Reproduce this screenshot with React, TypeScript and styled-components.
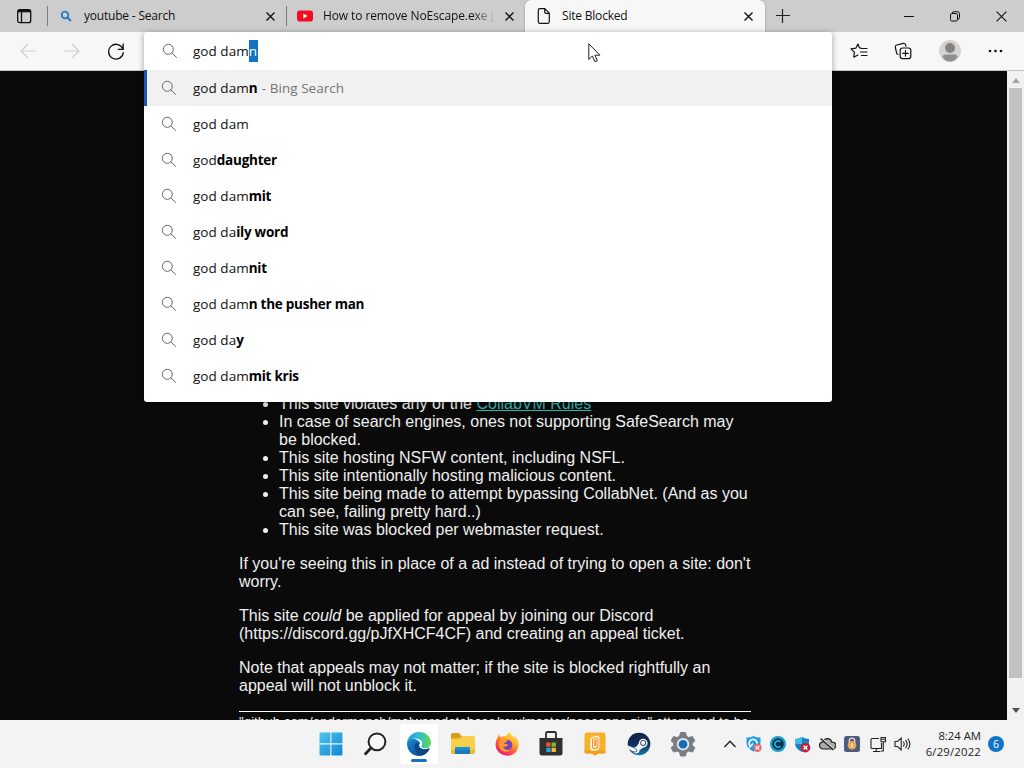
import React from "react";
import styled, { createGlobalStyle } from "styled-components";

const ui = `"Open Sans", "Noto Sans", sans-serif`;

const GlobalStyle = createGlobalStyle`
  * { box-sizing: border-box; }
  body { margin: 0; background: #0a0a0a; overflow: hidden; }
  svg { display: block; flex: none; }
`;

const Desktop = styled.div`
  position: relative;
  width: 1024px;
  height: 768px;
  display: flex;
  flex-direction: column;
  overflow: hidden;
  font-family: ${ui};
  color: #111;
`;

const TabStrip = styled.div`
  height: 32px;
  flex: none;
  display: flex;
  background: #cdcdcd;
`;

const TabActions = styled.div`
  width: 47px;
  padding: 9px 0 0 17px;
`;

const Divider = styled.div`
  width: 1px;
  height: 20px;
  margin-top: 6px;
  background: #7c7c7c;
`;

const Tab = styled.div<{ $active?: boolean; $width: number }>`
  width: ${(p) => p.$width}px;
  height: 32px;
  display: flex;
  align-items: center;
  padding: 0 ${(p) => (p.$active ? 10 : 9)}px 0 ${(p) => (p.$active ? 11 : 10)}px;
  background: ${(p) => (p.$active ? "#f7f7f7" : "transparent")};
  border-radius: ${(p) => (p.$active ? "6px 6px 0 0" : "0")};
  box-shadow: ${(p) => (p.$active ? "0 0 2px rgba(0, 0, 0, 0.3)" : "none")};
`;

const TabIcon = styled.span`
  width: 16px;
  height: 16px;
  flex: none;
  display: flex;
  align-items: center;
  justify-content: center;
`;

const TabTitle = styled.span<{ $spacing: number; $faded?: boolean }>`
  flex: 1;
  margin-left: 10px;
  font-size: 12px;
  line-height: 32px;
  height: 32px;
  letter-spacing: ${(p) => p.$spacing}px;
  white-space: nowrap;
  overflow: hidden;
  mask-image: ${(p) => (p.$faded ? "linear-gradient(to right, #000 calc(100% - 22px), transparent)" : "none")};
`;

const TabClose = styled.span`
  margin-left: 8px;
  padding: 1px 2px 0;
`;

const NewTab = styled.div`
  padding: 9px 0 0 11px;
`;

const WindowControls = styled.div`
  margin-left: auto;
  display: flex;
`;

const WindowButton = styled.div`
  width: 46px;
  height: 32px;
  display: flex;
  align-items: center;
  justify-content: center;
`;

const Toolbar = styled.div`
  height: 39px;
  flex: none;
  display: flex;
  align-items: center;
  justify-content: space-between;
  padding: 0 21px 0 20px;
  background: #f7f7f7;
  border-bottom: 1px solid #c4c4c4;
`;

const ToolGroup = styled.div<{ $gap: number }>`
  display: flex;
  align-items: center;
  gap: ${(p) => p.$gap}px;
`;

const Viewport = styled.div`
  height: 649px;
  flex: none;
  display: flex;
  background: #0a0a0a;
  overflow: hidden;
`;

const Page = styled.main`
  flex: 1;
  padding: 324px 0 0 239px;
  overflow: hidden;
  font: 16px/18px "Liberation Sans", Arial, sans-serif;
  color: #efefef;
`;

const Article = styled.article`
  width: 512px;
`;

const Reasons = styled.ul`
  margin: 0;
  padding-left: 40px;
`;

const RulesLink = styled.a`
  color: #2bb5ab;
  text-decoration: underline;
`;

const Paragraph = styled.p`
  margin: 16px 0;
`;

const Rule = styled.hr`
  height: 1px;
  margin: 0;
  border: 0;
  background: #fff;
`;

const Footnote = styled.div`
  font-size: 13.33px;
  line-height: 15px;
  margin-top: 2px;
  white-space: nowrap;
`;

const Scrollbar = styled.div`
  width: 17px;
  padding: 7px 2px 7px;
  display: flex;
  flex-direction: column;
  align-items: center;
  background: #f1f1f1;
`;

const Thumb = styled.div`
  width: 13px;
  height: 590px;
  margin: 5px 0 auto;
  background: #c1c1c1;
`;

const Omnibox = styled.div`
  position: absolute;
  left: 144px;
  top: 32px;
  width: 688px;
  height: 370px;
  background: #fff;
  border-radius: 3px;
  box-shadow: 0 1px 6px rgba(0, 0, 0, 0.35);
  overflow: visible;
`;

const Row = styled.div<{ $height: number; $selected?: boolean }>`
  height: ${(p) => p.$height}px;
  display: flex;
  align-items: center;
  gap: 16px;
  padding-left: ${(p) => (p.$selected ? 14 : 17)}px;
  border-left: ${(p) => (p.$selected ? "3px solid #1a56ab" : "0")};
  background: ${(p) => (p.$selected ? "#f1f1f1" : "transparent")};
`;

const InputRow = styled(Row)`
  gap: 15px;
  padding-left: 18px;
`;

const Query = styled.span`
  font-size: 13.5px;
  line-height: 20px;
  letter-spacing: 0.03px;
  white-space: pre;
  color: #111;
`;

const Match = styled.b`
  font-weight: 700;
  letter-spacing: -0.25px;
  color: #000;
`;

const Selection = styled.span`
  display: inline-block;
  height: 22px;
  line-height: 22px;
  padding-right: 1px;
  background: #1173c6;
  color: #fff;
`;

const Source = styled.span`
  padding-left: 1px;
  color: #747474;
`;

const Pointer = styled.div`
  position: absolute;
  left: 588px;
  top: 43px;
`;

const Taskbar = styled.div`
  height: 48px;
  flex: none;
  display: flex;
  background: #f3f3f3;
`;

const Apps = styled.div`
  margin-left: 309px;
  display: flex;
  align-items: center;
`;

const AppButton = styled.div<{ $active?: boolean }>`
  width: 38px;
  height: 40px;
  margin: 0 3px;
  border-radius: 4px;
  display: flex;
  flex-direction: column;
  align-items: center;
  justify-content: center;
  background: ${(p) => (p.$active ? "#fff" : "transparent")};
`;

const Running = styled.span`
  width: 16px;
  height: 3px;
  margin: 3px 0 -6px;
  border-radius: 2px;
  background: #1570bd;
`;

const Tray = styled.div`
  margin-left: 17px;
  display: flex;
  align-items: center;
  gap: 8px;
`;

const Clock = styled.div`
  margin-left: auto;
  padding-top: 8px;
  display: flex;
  flex-direction: column;
  align-items: flex-end;
  font-size: 11.3px;
  line-height: 16px;
  color: #222;
`;

const ClockLine = styled.span<{ $spacing: number }>`
  letter-spacing: ${(p) => p.$spacing}px;
`;

const Badge = styled.div`
  width: 16px;
  height: 16px;
  margin: 16px 20px 0 7px;
  border-radius: 50%;
  background: #1173c6;
  color: #fff;
  font-size: 10.5px;
  line-height: 16px;
  text-align: center;
`;

const SearchIcon = () => (
  <svg width="16" height="16" viewBox="0 0 16 16" fill="none" stroke="#666" strokeWidth="1">
    <circle cx="6.3" cy="6.3" r="5" />
    <path d="M9.900 9.900l4.900 4.800" />
  </svg>
);

const CloseIcon = ({ size = 9, width = 1.4 }: { size?: number; width?: number }) => (
  <svg width={size} height={size} viewBox="0 0 9 9" stroke="#111" strokeWidth={width}>
    <path d="M.5.5l8 8M8.5.5l-8 8" />
  </svg>
);

const WindowsIcon = () => (
  <svg width="24" height="24" viewBox="0 0 24 24">
    <defs>
      <linearGradient id="win" x1="0" y1="0" x2="1" y2="1">
        <stop stopColor="#4cc5ef" />
        <stop offset="1" stopColor="#1286d4" />
      </linearGradient>
    </defs>
    <path fill="url(#win)" d="M.5 1.5Q.5.5 1.5.5h9.8v10.8H.5zM12.4.5h10q1 0 1 1v9.8h-11zM.5 12.4h10.8v11H1.5q-1 0-1-1zM12.4 12.4h11v10q0 1-1 1h-10z" />
  </svg>
);

const EdgeIcon = () => (
  <svg width="24" height="24" viewBox="0 0 24 24">
    <defs>
      <linearGradient id="edgeTop" x1="0" y1=".5" x2="1" y2=".5">
        <stop stopColor="#2399d9" />
        <stop offset=".5" stopColor="#2dbed0" />
        <stop offset="1" stopColor="#67d94c" />
      </linearGradient>
      <linearGradient id="edgeBody" x1="0" y1="0" x2=".7" y2="1">
        <stop stopColor="#168ad4" />
        <stop offset="1" stopColor="#0b4b91" />
      </linearGradient>
    </defs>
    <path fill="url(#edgeBody)" d="M0 11.5C1 7 5 6 8.500 7.200c3 1 4.500 2.800 4.700 4.800-.8 0-1 .6-1 1.400 0 3.300 4.800 5.200 9.800 3.200.4-.2.7.1.4.5C20.200 21 16.500 24 12 24 5.400 24 0 19 0 11.500z" />
    <path fill="#0d4686" d="M8.800 10.500C5.600 14.500 8 22 14.500 23.700 18.300 23 21 20 22.400 17.200c.4-.6 0-.9-.5-.7-5.400 2.200-11.600-.6-10-5z" />
    <path fill="url(#edgeTop)" d="M0 11.500C.3 4.900 5.500 0 12 0c7 0 12 5 12 10.400 0 3.600-2.700 5.800-6 5.800-2.900 0-4.400-1-3.600-2.200 2.600-4-1-7.600-6-7.600-4 0-7 2-8.400 5.100z" />
  </svg>
);

const FolderIcon = () => (
  <svg width="26" height="24" viewBox="0 0 26 24">
    <path fill="#d99d16" d="M1 3q0-2 2-2h6l3 3.500v4H1z" />
    <path fill="#f8cf4a" d="M1 6.500h8.500l3-2.500H23q2 0 2 2v14q0 2-2 2H3q-2 0-2-2z" />
    <path fill="#efb52d" d="M1 18h24v2q0 2-2 2H3q-2 0-2-2z" />
    <path fill="#1b78bd" d="M5 22v-5.500Q5 15 6.500 15h12q1.500 0 1.500 1.500V22z" />
    <path fill="#1b91d4" d="M5 18v-1.500Q5 15 6.500 15h12q1.500 0 1.500 1.500V18z" />
  </svg>
);

const FirefoxIcon = () => (
  <svg width="24" height="24" viewBox="0 0 24 24">
    <defs>
      <linearGradient id="fox" x1=".9" y1="0" x2=".25" y2="1">
        <stop stopColor="#fff24a" />
        <stop offset=".4" stopColor="#ffac27" />
        <stop offset=".7" stopColor="#ff4b43" />
        <stop offset="1" stopColor="#e51782" />
      </linearGradient>
    </defs>
    <path fill="url(#fox)" d="M3 5l.3-2.500L6 5.200c2-1.200 4-.9 5.500-1.200C12 2 13.600.6 15 0c-.1 2.500 2.500 3.500 4.400 6l.3-2C24.700 9 24.800 16 20.500 20.500 15.500 25.500 6 24.500 2 18 -.5 14 .6 8 3 5z" />
    <circle cx="12" cy="13" r="5.300" fill="#7941bd" />
    <path fill="#ff9a2b" d="M5 8c3-2 5-.5 7.500.5-.5 2-3.500 1.500-3.700 3.500 1.700-.7 3.500-.2 4.500 1.200-2 .8-3 2.300-5.300 1.300 1 3 5 4.500 8 2.500-3 5-11 3-12-3C3.600 11.500 4 9.500 5 8z" />
  </svg>
);

const StoreIcon = () => (
  <svg width="24" height="26" viewBox="0 0 24 26">
    <path fill="none" stroke="#2c2c2c" strokeWidth="1.800" d="M7 8V2.500Q7 1 8.500 1h7Q17 1 17 2.500V8" />
    <path fill="#303030" d="M.5 7h23v15q0 2.500-2.500 2.500H3Q.5 24.500.5 22z" />
    <path fill="#ef5424" d="M7.300 11.500h4.300v4.300H7.300z" />
    <path fill="#7cb928" d="M12.600 11.500h4.300v4.300h-4.300z" />
    <path fill="#20a2e4" d="M7.300 16.800h4.300v4.300H7.300z" />
    <path fill="#fbb72b" d="M12.600 16.800h4.300v4.300h-4.300z" />
  </svg>
);

const OrangeAppIcon = () => (
  <svg width="24" height="24" viewBox="0 0 24 24">
    <path fill="#f8b02a" d="M1.500 3q0-2.500 2.500-2.500h16q2.500 0 2.500 2.500v17q0 1.500-2 1.500h-5l-3.500 2-3.500-2h-5q-2 0-2-1.500z" />
    <path fill="#f0a01c" d="M1.500 18.500h21V20q0 1.500-2 1.500h-5l-3.500 2-3.500-2h-5q-2 0-2-1.500z" />
    <path fill="#fdf0cd" d="M7.200 7.500q0-2 2-2.500l3.500-1.200q3.800-.8 3.800 2.700v8q0 3.500-4 4.200H10q-3 0-3-3z" />
    <path fill="none" stroke="#ee9238" strokeWidth="1.100" d="M9.600 8q0-2 2.500-2h.7q2.100 0 2.100 2v5.500q0 3-2.500 3h-.8q-2.100 0-2.100-2.300zM11.800 8.500q1.200-1 1.200.6v3.700q-.2 1.300-1.200.8z" />
  </svg>
);

const SteamIcon = () => (
  <svg width="24" height="24" viewBox="0 0 24 24">
    <defs>
      <linearGradient id="steam" x1="0" y1="0" x2="0" y2="1">
        <stop stopColor="#12213f" />
        <stop offset=".5" stopColor="#102e5d" />
        <stop offset="1" stopColor="#1d78ae" />
      </linearGradient>
    </defs>
    <circle cx="12" cy="12" r="11.300" fill="url(#steam)" />
    <path fill="#f3f7fa" d="M.8 13.500l6 2.400q1-.8 2.300-.8l2.700-3.900a4.400 4.400 0 1 1 4.500 4.300l-3.800 2.700a3.400 3.400 0 0 1-6.600 1L1.500 17z" />
    <circle cx="16.200" cy="10.900" r="2.900" fill="#173963" />
    <circle cx="16.200" cy="10.900" r="2.100" fill="#f3f7fa" />
    <path fill="none" stroke="#173963" strokeWidth=".8" d="M7.500 16.500l1.300.5a1.600 1.600 0 0 1-1.200 3l-1.400-.6" />
  </svg>
);

const SettingsIcon = () => (
  <svg width="26" height="26" viewBox="0 0 26 26">
    <path
      fill="#787d83"
      stroke="#787d83"
      strokeWidth="1"
      strokeLinejoin="round"
      d="M10.500 1.500h5l.8 3.600 2.500 1.500 3.600-1.100 2.500 4.300-2.700 2.500v2l2.700 2.500-2.500 4.300-3.600-1.100-2.500 1.500-.8 3.500h-5l-.8-3.500-2.500-1.500-3.600 1.100-2.500-4.300 2.700-2.500v-2L1.100 9.800l2.500-4.300 3.600 1.100 2.500-1.500z"
    />
    <circle cx="13" cy="13.200" r="6.200" fill="#e0e7eb" />
    <circle cx="13" cy="13.200" r="4.300" fill="#1769b2" />
  </svg>
);

const trayIcons = [
  <svg key="chevron" width="16" height="16" fill="none" stroke="#222" strokeWidth="1.400"><path d="M2.500 11L8 5.300l5.500 5.700" /></svg>,
  <svg key="shield" width="16" height="16" viewBox="0 0 16 16">
    <path fill="#1d9de3" d="M.5 1.500Q4 2 7.500 0q3.500 2 7 1.500V7q0 5.500-7 8.500-7-3-7-8.500z" />
    <path fill="none" stroke="#e4f5fd" strokeWidth="1.800" d="M4.500 10.500A4 4 0 1 1 11 8M3 12l4-4.500" />
    <circle cx="11.500" cy="11.800" r="4.200" fill="#ed6671" />
    <path stroke="#fff" strokeWidth="1.200" d="M9.700 10l3.600 3.600m0-3.600l-3.600 3.600" />
  </svg>,
  <svg key="c" width="16" height="16" viewBox="0 0 16 16" fill="none">
    <circle cx="8" cy="8" r="8" fill="#1b9fce" />
    <circle cx="8" cy="8" r="5.800" fill="#0b3448" />
    <path stroke="#25a8d6" strokeWidth="1.800" d="M10.500 5.800A3.200 3.200 0 1 0 10.500 10.200" />
  </svg>,
  <svg key="defender" width="17" height="17" viewBox="0 0 17 17">
    <path fill="#1682c5" d="M1 3q4 0 7-2 3 2 7 2v4q0 6-7 9-7-3-7-9z" />
    <path fill="#49b8e7" d="M1 3q4 0 7-2v7H1z" />
    <circle cx="11.500" cy="11.700" r="4.800" fill="#c91f35" />
    <path stroke="#fff" strokeWidth="1.400" d="M9.600 9.800l3.800 3.800m0-3.800l-3.800 3.800" />
  </svg>,
  <svg key="cloud" width="17" height="16" viewBox="0 0 17 16" fill="none" stroke="#222" strokeWidth="1.200">
    <path fill="#aaa" d="M4 13a3.600 3.600 0 1 1 .2-7.200 4.400 4.400 0 0 1 8.500.3 3.500 3.500 0 1 1 .3 6.900z" />
    <path stroke="#f3f3f3" strokeWidth="2" d="M2.500 2.500l12 11" />
    <path strokeWidth="1.500" d="M1.500 2.500l13 11.500" />
  </svg>,
  <svg key="lock" width="16" height="16" viewBox="0 0 16 16">
    <rect width="16" height="16" rx="2.500" fill="#4b5c83" />
    <path fill="none" stroke="#e6d8c8" strokeWidth="1.400" d="M5.300 7V4.800a2.700 2.700 0 0 1 5.400 0V7" />
    <circle cx="8" cy="9.300" r="4.300" fill="#efa64f" />
    <path fill="#fff2dd" d="M7.200 7.500h1.600v3.800H7.200z" />
  </svg>,
  <svg key="network" width="18" height="17" viewBox="0 0 18 17" fill="none" stroke="#222" strokeWidth="1.100">
    <path d="M11 2.500H4Q3 2.500 3 3.500v8q0 1 1 1h9.500V7M8.200 12.500v3M5 15.500h7.500M13 1.500h4.500v4.300H13zM15.300 5.800V15H13M13 3.200h4.500" />
  </svg>,
  <svg key="volume" width="17" height="16" viewBox="0 0 17 16" fill="none" stroke="#222" strokeWidth="1.100">
    <path d="M1 5.500h2.500L7.200 2v12L3.500 10.500H1zM9.300 5.500q1.800 2.500 0 5M11.500 3.800q3.200 4.200 0 8.400M13.800 2.500q4.200 5.500 0 11" />
  </svg>,
];

const suggestions: [string, string][] = [
  ["god dam", ""],
  ["god", "daughter"],
  ["god dam", "mit"],
  ["god da", "ily word"],
  ["god dam", "nit"],
  ["god dam", "n the pusher man"],
  ["god da", "y"],
  ["god dam", "mit kris"],
];

export default function App() {
  return (
    <Desktop>
      <GlobalStyle />
      <TabStrip>
        <TabActions>
          <svg width="15" height="15" viewBox="0 0 15 15" fill="none" stroke="#111" strokeWidth="1.300">
            <rect x=".7" y=".7" width="13" height="13" rx="2" />
            <path strokeWidth="2.600" d="M1 2h12.500" />
            <path d="M4.500 3v10.500" />
          </svg>
        </TabActions>
        <Divider />
        <Tab $width={238}>
          <TabIcon>
            <svg width="12" height="12" viewBox="0 0 12 12" fill="none" stroke="#2879c7" strokeWidth="1.800">
              <circle cx="5" cy="5" r="3.300" />
              <path strokeWidth="2.100" d="M7.400 7.400l3.500 3.500" />
            </svg>
          </TabIcon>
          <TabTitle $spacing={-0.2}>youtube - Search</TabTitle>
          <TabClose><CloseIcon /></TabClose>
        </Tab>
        <Divider />
        <Tab $width={238}>
          <TabIcon>
            <svg width="16" height="12" viewBox="0 0 16 12">
              <rect y=".4" width="16" height="11.200" rx="2.800" fill="#f20d20" />
              <path fill="#fff" d="M6.300 3.500l4.300 2.500-4.300 2.500z" />
            </svg>
          </TabIcon>
          <TabTitle $spacing={-0.1} $faded>How to remove NoEscape.exe [D</TabTitle>
          <TabClose><CloseIcon /></TabClose>
        </Tab>
        <Tab $width={240} $active>
          <TabIcon>
            <svg width="14" height="16" viewBox="0 0 14 16" fill="none" stroke="#111" strokeWidth="1.200" strokeLinejoin="round">
              <path d="M2.800.7h5l4.500 4.500v8.600q0 1.500-1.500 1.500h-8Q1.300 15.300 1.300 13.800V2.200Q1.300.7 2.800.7zM7.700.9v3q0 1.400 1.400 1.400h3" />
            </svg>
          </TabIcon>
          <TabTitle $spacing={-0.2}>Site Blocked</TabTitle>
          <TabClose><CloseIcon /></TabClose>
        </Tab>
        <NewTab>
          <svg width="14" height="14" stroke="#222" strokeWidth="1.200"><path d="M0 6.500h14M6.500 0v14" /></svg>
        </NewTab>
        <WindowControls>
          <WindowButton><svg width="10" height="10" stroke="#111"><path d="M0 5.500h10" /></svg></WindowButton>
          <WindowButton>
            <svg width="10" height="11" viewBox="0 0 10 11" fill="none" stroke="#111">
              <rect x=".5" y="2.500" width="7" height="7.500" rx="1.300" />
              <path d="M2.300 2.300Q2.300.7 4 .7h3.500q2 0 2 2v4q0 1.500-1.700 1.500" />
            </svg>
          </WindowButton>
          <WindowButton><CloseIcon size={11} width={0.9} /></WindowButton>
        </WindowControls>
      </TabStrip>

      <Toolbar>
        <ToolGroup $gap={28}>
          <svg width="16" height="16" fill="none" stroke="#cfcfcf" strokeWidth="1.200"><path d="M16 8H1M8 1L1 8l7 7" /></svg>
          <svg width="16" height="16" fill="none" stroke="#cfcfcf" strokeWidth="1.200"><path d="M0 8h15M8 1l7 7-7 7" /></svg>
          <svg width="17" height="17" viewBox="0 0 17 17" fill="none" stroke="#111" strokeWidth="1.300">
            <path d="M15 6.200A7.400 7.400 0 1 0 15.400 9.300M15.200.5v5.900H9.800" />
          </svg>
        </ToolGroup>
        <ToolGroup $gap={26.5}>
          <svg width="18" height="18" viewBox="0 0 18 18" fill="none" stroke="#111" strokeWidth="1.200" strokeLinejoin="round" strokeLinecap="round">
            <path d="M11 6.200L9.500 5.900 8 2 5.900 6.100 1 6.800l3.500 3.500-.8 4.900 4.200-2.200M11.500 6.500H17M10.500 10H17M11.500 13.500H17" />
          </svg>
          <svg width="18" height="18" viewBox="0 0 18 18" fill="none" stroke="#111" strokeWidth="1.200" strokeLinecap="round">
            <path d="M4 12.500Q2.800 12 2.600 10.800L1.300 5.300Q1 3.400 2.800 3L9.300 1.300q1.700-.3 2.200 1.300l.4 1.500" />
            <rect x="6.200" y="6" width="10.600" height="10.600" rx="2.300" />
            <path d="M11.500 8.500v5.600M8.700 11.300h5.600" />
          </svg>
          <svg width="22" height="22" viewBox="0 0 22 22">
            <circle cx="11" cy="11" r="11" fill="#d6d4d2" />
            <circle cx="11" cy="8" r="5" fill="#858381" />
            <path fill="#918f8d" d="M3.500 17q0-2.500 3-2.500h9q3 0 3 2.500-3 4.500-7.500 4.500T3.500 17z" />
          </svg>
          <svg width="16" height="4" fill="#111"><circle cx="3" cy="2" r="1.300" /><circle cx="8.500" cy="2" r="1.300" /><circle cx="14" cy="2" r="1.300" /></svg>
        </ToolGroup>
      </Toolbar>

      <Viewport>
        <Page>
          <Article>
            <Reasons>
              <li>This site violates any of the <RulesLink>CollabVM Rules</RulesLink></li>
              <li>In case of search engines, ones not supporting SafeSearch may be blocked.</li>
              <li>This site hosting NSFW content, including NSFL.</li>
              <li>This site intentionally hosting malicious content.</li>
              <li>This site being made to attempt bypassing CollabNet. (And as you can see, failing pretty hard..)</li>
              <li>This site was blocked per webmaster request.</li>
            </Reasons>
            <Paragraph>If you're seeing this in place of a ad instead of trying to open a site: don't worry.</Paragraph>
            <Paragraph>This site <i>could</i> be applied for appeal by joining our Discord (https://discord.gg/pJfXHCF4CF) and creating an appeal ticket.</Paragraph>
            <Paragraph>Note that appeals may not matter; if the site is blocked rightfully an appeal will not unblock it.</Paragraph>
            <Rule />
            <Footnote>"github.com/endermanch/malwaredatabase/raw/master/noescape.zip" attempted to be</Footnote>
          </Article>
        </Page>
        <Scrollbar>
          <svg width="8" height="5" fill="#a3a3a3"><path d="M0 5l4-5 4 5z" /></svg>
          <Thumb />
          <svg width="8" height="5" fill="#505050"><path d="M0 0l4 5 4-5z" /></svg>
        </Scrollbar>
      </Viewport>

      <Taskbar>
        <Apps>
          <AppButton><WindowsIcon /></AppButton>
          <AppButton>
            <svg width="24" height="24" viewBox="0 0 24 24" fill="none" stroke="#222" strokeWidth="2">
              <circle cx="14" cy="9.800" r="8.400" fill="#f8f8f8" />
              <path strokeWidth="2.800" strokeLinecap="round" d="M8 16l-5.500 5.700" />
            </svg>
          </AppButton>
          <AppButton $active><EdgeIcon /><Running /></AppButton>
          <AppButton><FolderIcon /></AppButton>
          <AppButton><FirefoxIcon /></AppButton>
          <AppButton><StoreIcon /></AppButton>
          <AppButton><OrangeAppIcon /></AppButton>
          <AppButton><SteamIcon /></AppButton>
          <AppButton><SettingsIcon /></AppButton>
        </Apps>
        <Tray>{trayIcons}</Tray>
        <Clock>
          <ClockLine $spacing={0}>8:24 AM</ClockLine>
          <ClockLine $spacing={0.2}>6/29/2022</ClockLine>
        </Clock>
        <Badge>6</Badge>
      </Taskbar>

      <Omnibox>
        <InputRow $height={38}>
          <SearchIcon />
          <Query>god dam<Selection>n</Selection></Query>
        </InputRow>
        <Row $height={36} $selected>
          <SearchIcon />
          <Query>god dam<Match>n</Match><Source> - Bing Search</Source></Query>
        </Row>
        {suggestions.map(([typed, rest]) => (
          <Row key={typed + rest} $height={36}>
            <SearchIcon />
            <Query>{typed}<Match>{rest}</Match></Query>
          </Row>
        ))}
      </Omnibox>
      <Pointer>
        <svg width="13" height="20" viewBox="0 0 13 20" fill="#fff" stroke="#222">
          <path d="M.8.800v15.700l3.600-3.500 2.500 5.700 2.500-1.100-2.500-5.400h5z" />
        </svg>
      </Pointer>
    </Desktop>
  );
}
